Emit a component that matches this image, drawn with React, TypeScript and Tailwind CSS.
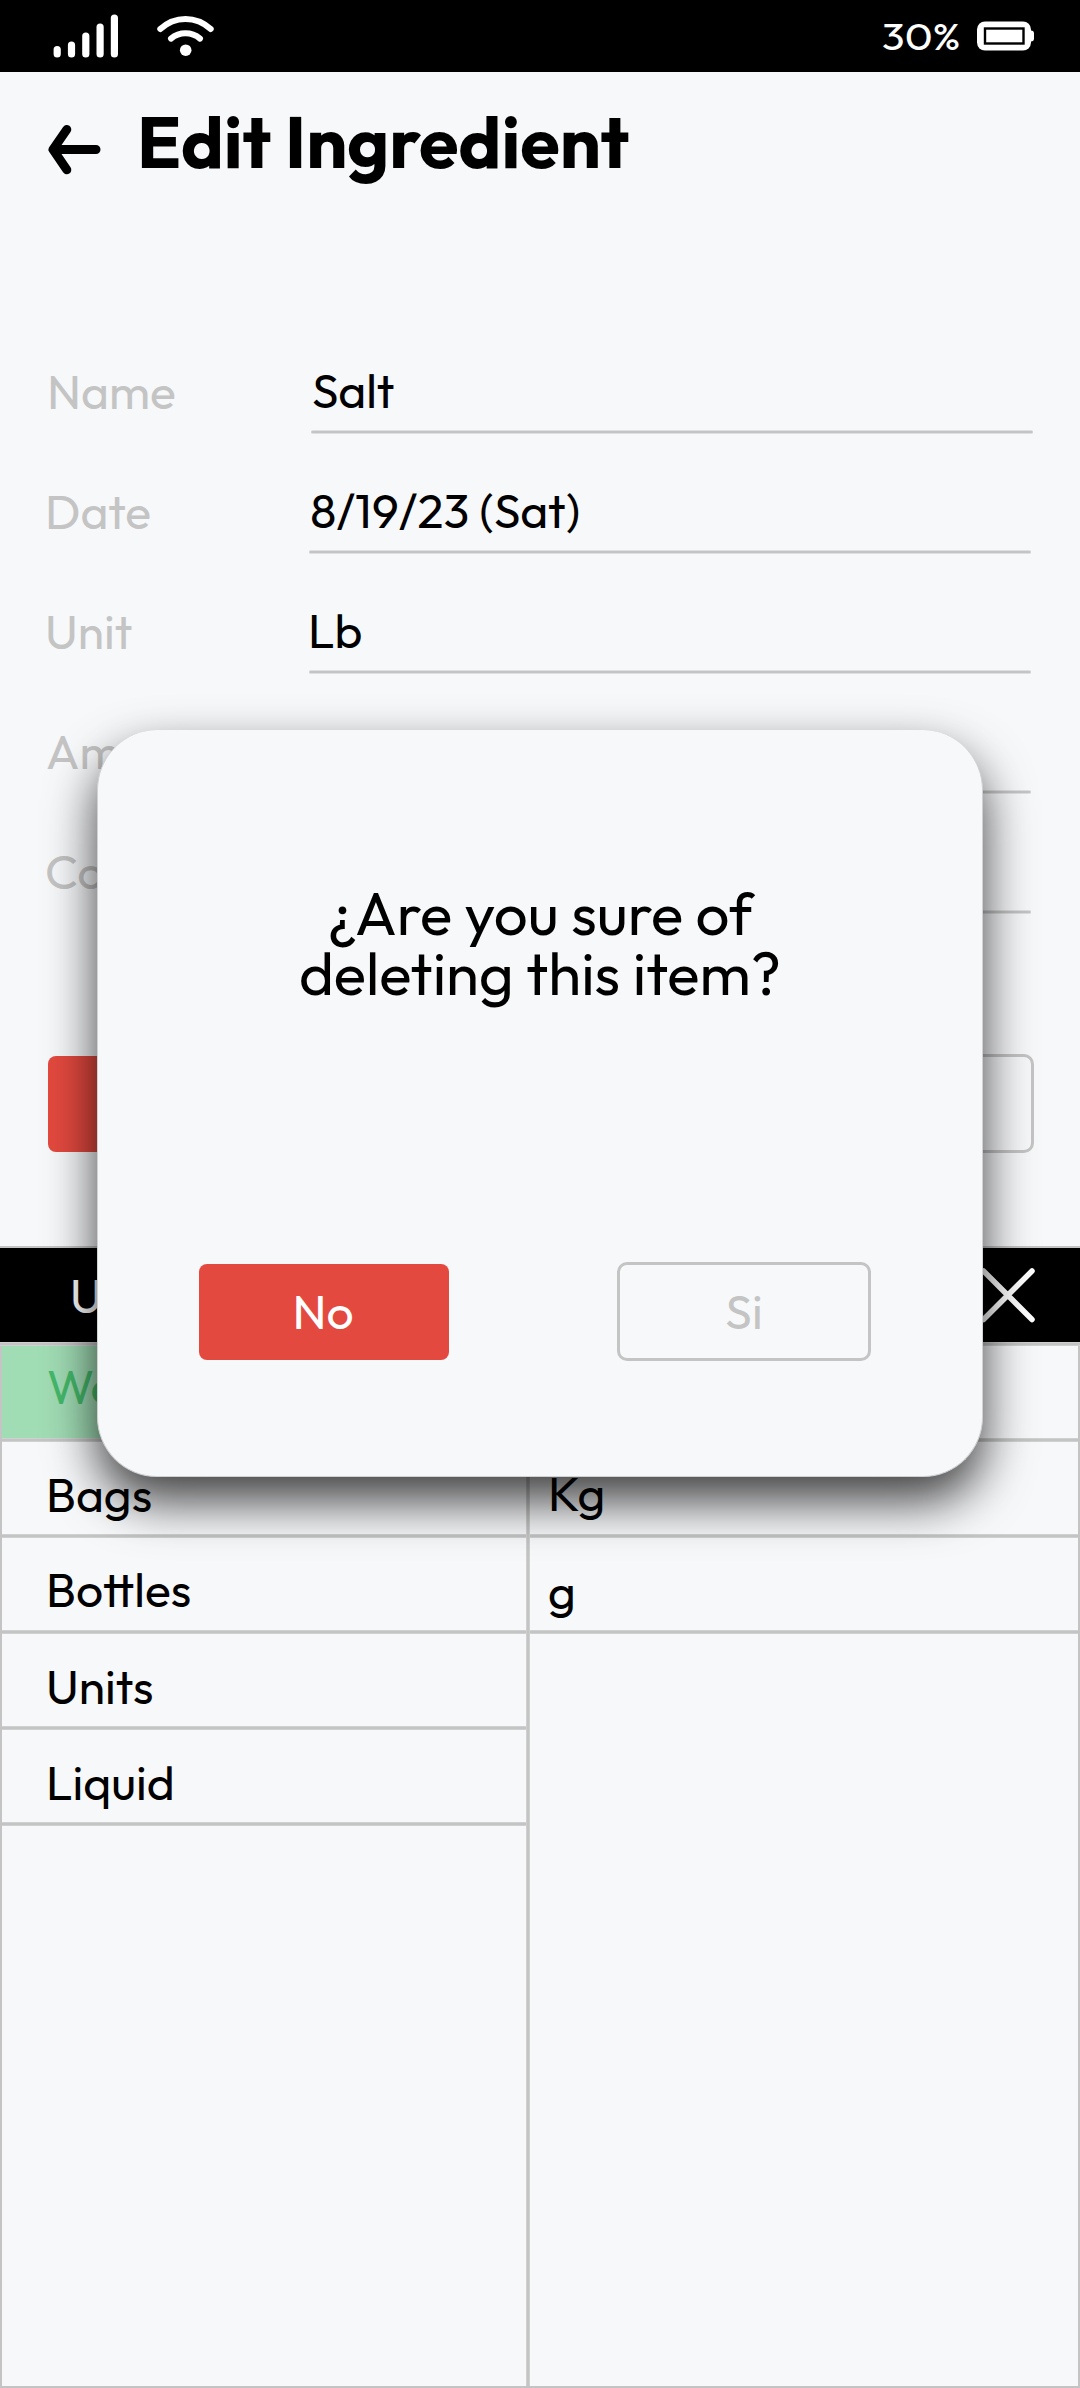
import React from "react";

type FieldProps = { label: string; value: string; labelClass: string; valueClass: string; lineClass: string };

function Field({ label, value, labelClass, valueClass, lineClass }: FieldProps) {
  return (
    <div className="flex h-[120px]">
      <div className={`w-[309px] shrink-0 pt-[47px] text-[#c4c4c4] ${labelClass}`}>{label}</div>
      <div className="flex flex-1 flex-col justify-between pt-[46px]">
        <div className={valueClass}>{value}</div>
        <div className={`h-1 rounded-sm border-y border-[#dedfe0] bg-[#c4c4c4] ${lineClass}`} />
      </div>
    </div>
  );
}

const Rule = () => <div className="h-1 shrink-0 border-y border-[#cfd0d0] bg-[#c4c4c4]" />;

function Cell({ text, className }: { text: string; className: string }) {
  return (
    <>
      <div className={`h-[92px] shrink-0 ${className}`}>{text}</div>
      <Rule />
    </>
  );
}

function StatusBar() {
  return (
    <div className="flex h-[72px] items-start justify-between bg-black">
      <svg width="240" height="72" viewBox="0 0 240 72" fill="none" stroke="#fff" strokeLinecap="round">
        <g strokeWidth="7.2">
          <path d="M57.2 49.5V54M71.5 45V54M85.8 36V54M100.1 27V54M114.4 18V54" />
        </g>
        <g strokeWidth="6">
          <path d="M160.3 29C175 15.6 196 15.6 210.7 29M171 38.6C179.5 31.6 191.5 31.6 200 38.6" />
        </g>
        <circle cx="185.7" cy="50.2" r="5.8" fill="#fff" stroke="none" />
      </svg>
      <div className="flex">
        <span className="origin-right scale-x-[1.18] pt-[12px] pr-[12px] text-[36px] leading-[50px] text-white">30%</span>
        <svg width="105" height="72" viewBox="975 0 105 72">
          <rect x="977" y="21.5" width="54" height="29" rx="8" fill="#fff" />
          <rect x="1027" y="30.5" width="7" height="11" rx="3" fill="#fff" />
          <rect x="985" y="28.5" width="38.5" height="15" fill="#fff" stroke="#000" strokeWidth="2.4" />
        </svg>
      </div>
    </div>
  );
}

export default function App() {
  return (
    <div className="relative flex h-[2388px] w-[1080px] flex-col overflow-hidden bg-[#f7f8fa] font-[Outfit,Lato,sans-serif] text-[48px] leading-[60px] text-black">
      <StatusBar />

      <header className="flex h-[242px] shrink-0 pt-[33px]">
        <svg className="shrink-0" width="137" height="90" viewBox="0 105 137 90" fill="none" stroke="#000" strokeWidth="9" strokeLinecap="round" strokeLinejoin="round">
          <path d="M66.8 129.5L53 149.5L66.8 169.8M53 149.5H96" />
        </svg>
        <h1 className="pt-px text-[72px] leading-[72px] font-bold">Edit Ingredient</h1>
      </header>

      <main className="flex h-[932px] shrink-0 flex-col">
        <Field label="Name" value="Salt" labelClass="pl-[47px]" valueClass="pl-[3px]" lineClass="ml-[2px] mr-[47px]" />
        <Field label="Date" value="8/19/23 (Sat)" labelClass="pl-[45px]" valueClass="pl-[1px]" lineClass="mr-[49px]" />
        <Field label="Unit" value="Lb" labelClass="pl-[45px]" valueClass="-ml-[1px]" lineClass="mr-[49px]" />
        <Field label="Amount" value="5" labelClass="pl-[46px]" valueClass="pl-[1px]" lineClass="mr-[49px]" />
        <Field label="Cost" value="10" labelClass="pl-[45px]" valueClass="pl-[1px]" lineClass="mr-[49px]" />
        <div className="mt-[140px] mr-[46px] ml-12 flex justify-between">
          <button className="mt-[2px] h-24 w-[250px] rounded-lg bg-[#e4493f] text-white">Delete</button>
          <button className="h-[99px] w-[254px] rounded-[10px] border-3 border-[#c4c4c4] text-[#c4c4c4]">Save</button>
        </div>
      </main>

      <section className="flex flex-1 flex-col">
        <div className="flex h-[96px] shrink-0 justify-between border-t-2 border-[#c4c4c4] bg-black pt-[17px] text-white">
          <span className="pl-[70px]">Units</span>
          <svg className="mr-[42px] mt-[3px]" width="60" height="56" viewBox="978 1269 60 56" stroke="#fff" strokeWidth="5.5" strokeLinecap="round">
            <path d="M983.5 1272L1032 1320.5M1032 1272L983.5 1320.5" />
          </svg>
        </div>
        <Rule />
        <div className="flex flex-1 border-x-2 border-b-2 border-[#c4c4c4]">
          <div className="flex w-[524px] shrink-0 flex-col">
            <Cell text="Weight" className="bg-[#a0dcb4] pt-[10px] pl-[45px] text-[#44b96a]" />
            <Cell text="Bags" className="pt-[22px] pl-11" />
            <Cell text="Bottles" className="pt-[21px] pl-11" />
            <Cell text="Units" className="pt-[22px] pl-11" />
            <Cell text="Liquid" className="pt-[22px] pl-11" />
          </div>
          <div className="w-1 border-x border-[#cfd0d0] bg-[#c4c4c4]" />
          <div className="flex flex-1 flex-col">
            <Cell text="Lb" className="pt-[10px] pl-[18px]" />
            <Cell text="Kg" className="pt-[21px] pl-[18px]" />
            <Cell text="g" className="pt-[23px] pl-[18px]" />
          </div>
        </div>
      </section>

      <div
        role="dialog"
        className="absolute top-[730px] left-[97px] flex h-[747px] w-[886px] flex-col rounded-[60px] border border-t-0 border-[#d0d1d3] bg-[#f7f8fa] px-[101px] shadow-[0_24px_50px_rgba(0,0,0,0.75)]"
      >
        <p className="mt-[153px] text-center text-[60px] leading-[60px]">
          ¿Are you sure of
          <br />
          deleting this item?
        </p>
        <div className="mt-[259px] flex justify-between">
          <button className="mt-[2px] h-24 w-[250px] rounded-lg bg-[#e4493f] pr-[2px] pb-[3px] text-white">No</button>
          <button className="mr-[10px] h-[99px] w-[254px] rounded-[10px] border-3 border-[#c4c4c4] pb-[2px] text-[#c4c4c4]">Si</button>
        </div>
      </div>
    </div>
  );
}
